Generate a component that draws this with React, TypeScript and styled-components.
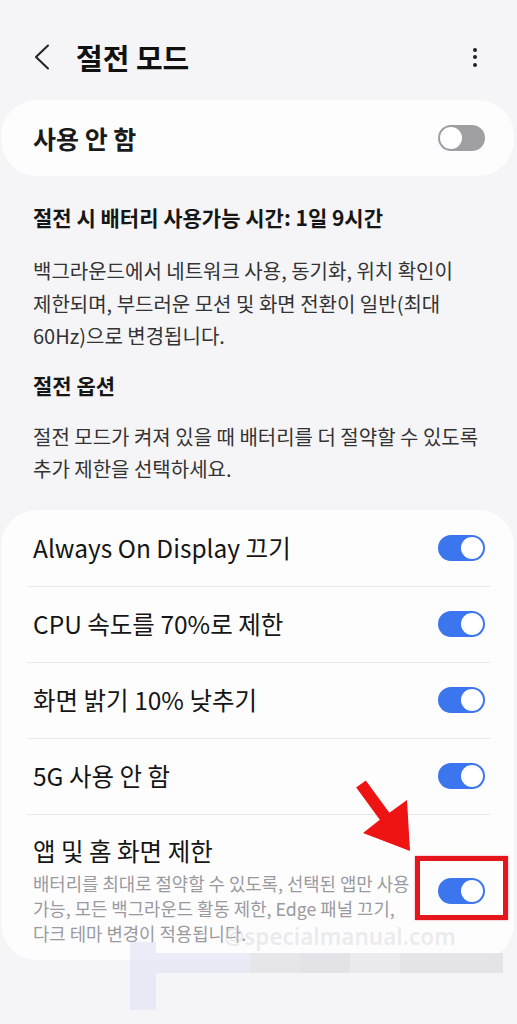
import React from "react";
import styled, { createGlobalStyle } from "styled-components";

const Global = createGlobalStyle`
  html, body { margin: 0; padding: 0; background: #f5f5f7; }
  body { font-family: "Noto Sans CJK KR", "Noto Sans", sans-serif; color: #111; word-break: keep-all; }
  * { box-sizing: border-box; }
`;

const Page = styled.div`
  position: relative;
  width: 517px;
  height: 1024px;
  overflow: hidden;
  background: #f5f5f7;
`;

const Header = styled.header`
  display: flex;
  align-items: center;
  height: 56px;
  margin-top: 29px;
  padding: 0 28px 0 30px;
`;

const BackButton = styled.div`
  width: 26px;
  height: 30px;
  display: flex;
  align-items: center;
  justify-content: flex-start;
  padding-left: 4px;
`;

const Title = styled.h1`
  margin: 0 0 0 20px;
  font-size: 29px;
  font-weight: 700;
  line-height: 40px;
  color: #111;
  flex: 1;
`;

const Kebab = styled.div`
  display: flex;
  flex-direction: column;
  gap: 3.5px;
  align-items: center;
  padding-right: 12px;
`;

const Dot = styled.span`
  width: 4px;
  height: 4px;
  border-radius: 50%;
  background: #222;
`;

const Card = styled.section<{ $mt?: number }>`
  margin: ${(p) => p.$mt ?? 0}px 3px 0 1px;
  background: #fdfdfe;
  border-radius: 36px;
`;

const MasterRow = styled.div`
  height: 76px;
  display: flex;
  align-items: center;
  justify-content: space-between;
  padding: 0 29px 0 32px;
`;

const MasterLabel = styled.span`
  font-size: 25px;
  font-weight: 700;
  color: #1a1a1a;
`;

const Info = styled.div`
  padding: 25px 33px 0 33px;
`;

const Heading = styled.h2<{ $mt?: number }>`
  margin: ${(p) => p.$mt ?? 0}px 0 0;
  font-size: 21px;
  font-weight: 700;
  line-height: 32px;
  color: #161616;
`;

const Para = styled.p<{ $mt?: number }>`
  margin: ${(p) => p.$mt ?? 0}px 0 0;
  font-size: 20px;
  font-weight: 400;
  line-height: 32.5px;
  color: #333;
`;

const OptionsCard = styled(Card)`
  padding-top: 1px;
  padding-bottom: 14px;
  margin-top: 24px;
`;

const Row = styled.div<{ $divider?: boolean }>`
  display: flex;
  align-items: center;
  justify-content: space-between;
  min-height: 75px;
  padding: 0 29px 0 32px;
  position: relative;
  ${(p) =>
    p.$divider &&
    `&::before { content: ""; position: absolute; top: -1px; left: 26px; right: 24px; height: 1px; background: #e8e8ea; }`}
  & + & { margin-top: 1px; }
`;

const TallRow = styled(Row)`
  align-items: center;
  padding-top: 21px;
`;

const RowText = styled.div`
  display: flex;
  flex-direction: column;
  max-width: 386px;
`;

const RowTitle = styled.span`
  font-size: 24.5px;
  font-weight: 400;
  line-height: 30px;
  color: #151515;
`;

const RowSub = styled.span`
  margin-top: 5px;
  font-size: 17.8px;
  line-height: 25px;
  color: #9a9a9e;
`;

const Track = styled.div<{ $on: boolean }>`
  position: relative;
  flex: none;
  width: 47px;
  height: 26px;
  border-radius: 13px;
  background: ${(p) => (p.$on ? "#3b76ef" : "#9e9ea3")};
`;

const Knob = styled.span<{ $on: boolean }>`
  position: absolute;
  top: 2px;
  ${(p) => (p.$on ? "right: 2px;" : "left: 2px;")}
  width: 22px;
  height: 22px;
  border-radius: 50%;
  background: #fff;
`;

const Toggle = ({ on }: { on: boolean }) => (
  <Track $on={on}>
    <Knob $on={on} />
  </Track>
);

const Overlay = styled.svg`
  position: absolute;
  left: 0;
  top: 0;
  pointer-events: none;
`;

const Highlight = styled.div`
  position: absolute;
  left: 415px;
  top: 856px;
  width: 93px;
  height: 64px;
  border: 5px solid #e5161c;
  box-shadow: 0 0 2px rgba(200, 0, 0, 0.4);
`;

const Watermark = styled.div`
  position: absolute;
  left: 224px;
  top: 921px;
  font-family: "Noto Sans", "Open Sans", sans-serif;
  font-size: 22.5px;
  font-weight: 600;
  color: rgba(210, 210, 216, 0.42);
  pointer-events: none;
`;

const Smudge = styled.div<{ $c: string }>`
  position: absolute;
  background: ${(p) => p.$c};
  pointer-events: none;
`;

export default function App() {
  return (
    <Page>
      <Global />
      <Header>
        <BackButton>
          <svg width="16" height="26" viewBox="0 0 16 26">
            <path d="M14 1.5 L2 13 L14 24.5" fill="none" stroke="#222" strokeWidth="2" strokeLinecap="round" strokeLinejoin="round" />
          </svg>
        </BackButton>
        <Title>절전 모드</Title>
        <Kebab>
          <Dot />
          <Dot />
          <Dot />
        </Kebab>
      </Header>

      <Card $mt={15}>
        <MasterRow>
          <MasterLabel>사용 안 함</MasterLabel>
          <Toggle on={false} />
        </MasterRow>
      </Card>

      <Info>
        <Heading>절전 시 배터리 사용가능 시간: 1일 9시간</Heading>
        <Para $mt={22}>
          백그라운드에서 네트워크 사용, 동기화, 위치 확인이 제한되며, 부드러운 모션 및 화면 전환이 일반(최대 60Hz)으로 변경됩니다.
        </Para>
        <Heading $mt={16}>절전 옵션</Heading>
        <Para $mt={20}>절전 모드가 켜져 있을 때 배터리를 더 절약할 수 있도록 추가 제한을 선택하세요.</Para>
      </Info>

      <OptionsCard>
        <Row>
          <RowTitle>Always On Display 끄기</RowTitle>
          <Toggle on />
        </Row>
        <Row $divider>
          <RowTitle>CPU 속도를 70%로 제한</RowTitle>
          <Toggle on />
        </Row>
        <Row $divider>
          <RowTitle>화면 밝기 10% 낮추기</RowTitle>
          <Toggle on />
        </Row>
        <Row $divider>
          <RowTitle>5G 사용 안 함</RowTitle>
          <Toggle on />
        </Row>
        <TallRow $divider>
          <RowText>
            <RowTitle>앱 및 홈 화면 제한</RowTitle>
            <RowSub>
              배터리를 최대로 절약할 수 있도록, 선택된 앱만 사용 가능, 모든 백그라운드 활동 제한, Edge 패널 끄기, 다크 테마 변경이 적용됩니다.
            </RowSub>
          </RowText>
          <Toggle on />
        </TallRow>
      </OptionsCard>

      <Watermark>@specialmanual.com</Watermark>
      <Smudge $c="rgba(225,230,243,0.7)" style={{ left: 130, top: 942, width: 26, height: 68 }} />
      <Smudge $c="rgba(225,230,243,0.7)" style={{ left: 156, top: 953, width: 94, height: 20 }} />
      <Smudge $c="rgba(228,228,232,0.9)" style={{ left: 250, top: 953, width: 50, height: 20 }} />
      <Smudge $c="rgba(224,224,228,0.9)" style={{ left: 300, top: 953, width: 50, height: 20 }} />
      <Smudge $c="rgba(233,233,236,0.9)" style={{ left: 350, top: 953, width: 50, height: 20 }} />
      <Smudge $c="rgba(226,226,230,0.9)" style={{ left: 400, top: 953, width: 103, height: 20 }} />

      <Highlight />
      <Overlay width="517" height="1024" viewBox="0 0 517 1024">
        <polygon
          points="365.8,780.5 389.4,812.8 407,800 410,851 363,833 379.8,819.8 356.2,787.5"
          fill="#ee1414"
        />
      </Overlay>
    </Page>
  );
}
